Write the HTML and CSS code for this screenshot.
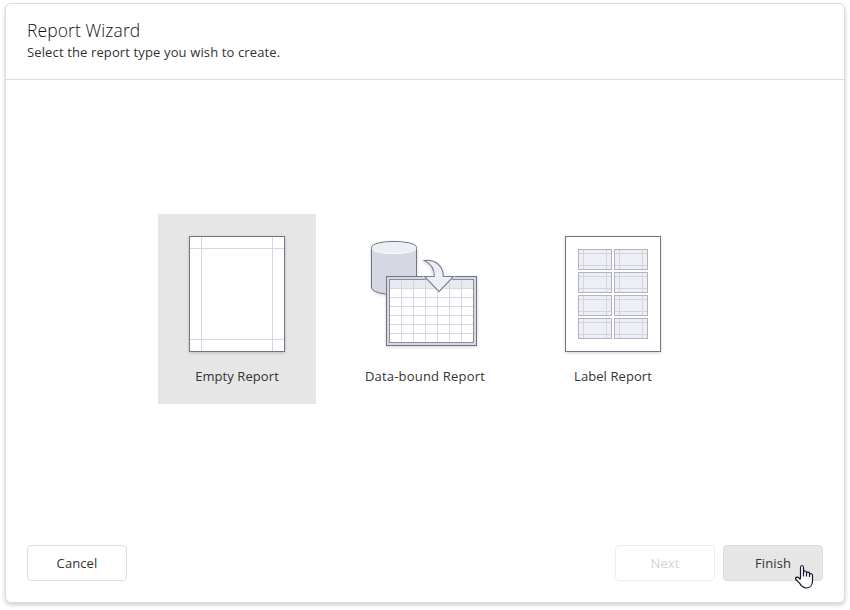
FILE: index.html
```html
<!DOCTYPE html>
<html lang="en">
<head>
<meta charset="utf-8">
<title>Report Wizard</title>
<link rel="stylesheet" href="styles.css">
</head>
<body>
<main class="dialog">
  <header class="header">
    <h1 class="title">Report Wizard</h1>
    <p class="subtitle">Select the report type you wish to create.</p>
  </header>
  <section class="types">
    <div class="type selected">
      <svg class="icon" width="112" height="120" viewBox="0 0 112 120" fill="none">
        <rect class="sheet" x="8.5" y="2.5" width="95" height="115"/>
        <path stroke="#d5d7e2" d="M20.5 3V117M91.5 3V117M9 14.5H103M9 105.5H103"/>
      </svg>
      <span class="type-label">Empty Report</span>
    </div>
    <div class="type">
      <svg class="icon" width="112" height="120" viewBox="0 0 112 120" fill="none">
        <path d="M2.500 13.500V53C2.500 63 47.500 63 47.500 53V13.500C47.500 5.500 2.500 5.500 2.500 13.500Z" fill="#d5d7e2" stroke="#717583"/>
        <ellipse cx="25" cy="13.700" rx="22" ry="5.600" fill="#eeeff5"/>
        <path d="M3 14.500C5 21.300 45 21.300 47 14.500" stroke="#fff"/>
        <rect x="17.500" y="42.500" width="90" height="69" fill="#d5d7e2" stroke="#717583"/>
        <rect x="20.500" y="45.500" width="84" height="63" fill="#fff"/>
        <path fill="#e9eaf0" d="M21 46H104V54H21Z"/>
        <path stroke="#d5d7e2" d="M32.500 46V108M44.500 46V108M56.500 46V108M68.500 46V108M80.500 46V108M92.500 46V108M21 54.500H104M21 63.500H104M21 72.500H104M21 81.500H104M21 90.500H104M21 99.500H104"/>
        <rect x="20.500" y="45.500" width="84" height="63" stroke="#8b8f9d"/>
        <path d="M55.500 26.700C66 25 74.300 32 74.300 42.500H84.500L70 57.700L55.500 42.500H65.300C65.500 35 61.500 29.500 55.500 26.700Z" fill="#eeeff5" stroke="#fff" stroke-width="2"/>
        <path d="M55.500 26.700C66 25 74.300 32 74.300 42.500H84.500L70 57.700L55.500 42.500H65.300C65.500 35 61.500 29.500 55.500 26.700Z" fill="#eeeff5" stroke="#7d818f" stroke-width="1.200"/>
      </svg>
      <span class="type-label wide">Data-bound Report</span>
    </div>
    <div class="type">
      <svg class="icon" width="112" height="120" viewBox="0 0 112 120" fill="none">
        <defs>
          <g id="cell">
            <rect x=".5" y=".5" width="33" height="20" fill="#eeeff5"/>
            <path stroke="#d3d4dc" d="M5.500 1V20M28.500 1V20M1 4.500H33M1 16.500H33"/>
            <rect x=".5" y=".5" width="33" height="20" stroke="#b1b4c0"/>
          </g>
        </defs>
        <rect class="sheet" x="8.500" y="2.500" width="95" height="115"/>
        <use href="#cell" x="21" y="15"/><use href="#cell" x="57" y="15"/>
        <use href="#cell" x="21" y="38"/><use href="#cell" x="57" y="38"/>
        <use href="#cell" x="21" y="61"/><use href="#cell" x="57" y="61"/>
        <use href="#cell" x="21" y="84"/><use href="#cell" x="57" y="84"/>
      </svg>
      <span class="type-label">Label Report</span>
    </div>
  </section>
  <footer class="footer">
    <button class="button cancel">Cancel</button>
    <button class="button next" disabled>Next</button>
    <button class="button finish">Finish</button>
  </footer>
</main>
<svg class="cursor" width="20" height="26" viewBox="0 0 20 26">
  <path d="M5.500 14.500V3.500C5.500 .8 8.500 .8 8.500 3.500V9V7.700C9 6.500 11.500 6.700 11.500 8.500V9C12 7.700 14.500 8 14.500 9.500V10.300C15.300 9 17.500 9.600 17.500 11.500V16.500C17.500 21 15 24 11.300 24C8 24 6.500 22.300 4.500 19.200L.9 15.500C-.2 13.500 2 12.500 3.500 13.500L5.500 15.500" fill="#fff" stroke="#15152b" stroke-width="1.200" stroke-linejoin="round"/>
  <path d="M8.500 8V12.500M11.500 8.500V12.500M14.500 9.500V13" fill="none" stroke="#15152b" stroke-width="1.200"/>
</svg>
</body>
</html>
```
FILE: styles.css
```css
* { box-sizing: border-box; }
body {
  margin: 0;
  width: 850px;
  height: 610px;
  padding: 3px 5px 7px;
  overflow: hidden;
  background: #fff;
  color: #333;
  font: 400 13px/20px "Open Sans", "Noto Sans", sans-serif;
  letter-spacing: .08px;
}
.dialog {
  height: 600px;
  display: flex;
  flex-direction: column;
  border: 1px solid #ddd;
  border-radius: 6px;
  background: #fff;
  box-shadow: 0 2px 4px rgba(0, 0, 0, .2);
}
.header {
  height: 76px;
  padding: 14px 21px 0;
  border-bottom: 1px solid #ddd;
}
.title {
  margin: 0;
  color: #111;
  font-size: 17.5px;
  font-weight: 350;
  line-height: 24px;
  letter-spacing: .1px;
}
.subtitle { margin: 0; letter-spacing: .13px; }
.types {
  flex: 1;
  display: flex;
  justify-content: center;
  align-items: flex-start;
  gap: 30px;
  padding-top: 134px;
}
.type {
  width: 158px;
  height: 190px;
  padding-top: 20px;
  display: flex;
  flex-direction: column;
  align-items: center;
}
.selected { background: #e6e6e6; }
.icon {
  display: block;
  overflow: visible;
  filter: drop-shadow(0 1px 1.500px rgba(0, 0, 0, .18));
}
.sheet { fill: #fff; stroke: #717583; }
.type-label { margin-top: 12px; white-space: nowrap; }
.wide { letter-spacing: .2px; }
.footer {
  display: flex;
  gap: 8px;
  padding: 0 21px 21px;
}
.button {
  width: 100px;
  height: 36px;
  padding: 0;
  border: 1px solid #ddd;
  border-radius: 4px;
  background: #fff;
  color: #333;
  font: inherit;
  letter-spacing: .1px;
}
.cancel { margin-right: auto; }
.next { border-color: #eee; color: #d3d3d3; }
.finish { background: #e6e6e6; }
.cursor { position: absolute; left: 795px; top: 564px; }
```
